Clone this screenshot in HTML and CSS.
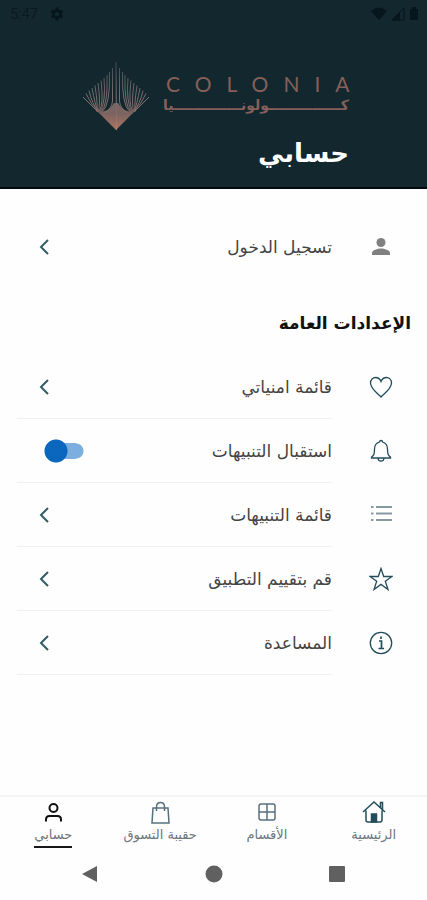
FILE: index.html
```html
<!DOCTYPE html>
<html lang="ar" dir="rtl">
<head>
<meta charset="utf-8">
<meta name="viewport" content="width=device-width, initial-scale=1">
<title>حسابي</title>
<link rel="stylesheet" href="styles.css">
</head>
<body>
<header class="header">
  <div class="status" dir="ltr">
    <span class="clock">5:47</span>
    <svg class="status-gear" viewBox="0 0 24 24" width="14" height="14" aria-hidden="true"><circle cx="12" cy="12" r="6" fill="none" stroke="currentColor" stroke-width="5"/><path d="M12 1v22M2.500 6.500l19 11M2.500 17.500l19-11" stroke="currentColor" stroke-width="5" stroke-dasharray="4 14 4"/></svg>
    <span class="status-icons">
      <svg viewBox="0 0 16 14" width="16" height="14" aria-hidden="true"><path d="M0 4Q8-3 16 4L8 13z" fill="currentColor"/></svg>
      <svg viewBox="0 0 14 14" width="14" height="14" aria-hidden="true"><path d="M1 13L13 1v12z" fill="none" stroke="currentColor"/><path d="M0 13.500L9 5v8.500z" fill="currentColor"/></svg>
      <svg viewBox="0 0 10 14" width="10" height="14" aria-hidden="true"><path d="M1 2h2V0h4v2h2v11H1z" fill="currentColor"/></svg>
    </span>
  </div>
  <div class="brand" dir="ltr">
    <svg class="emblem" viewBox="0 0 68 70" width="68" height="70" aria-hidden="true">
      <defs>
        <linearGradient id="copper" gradientUnits="userSpaceOnUse" x1="0" y1="0" x2="0" y2="70">
          <stop offset="0" stop-color="#3c474b"/><stop offset=".5" stop-color="#7b706f"/><stop offset=".75" stop-color="#876a65"/><stop offset="1" stop-color="#c17f6b"/>
        </linearGradient>
        <g id="rays">
          <path d="M67 36L53 50M64 32.500Q59 44 52 50M61 29.500Q58 43 52 50M58 27Q55 43 52 51M55 24.500Q52 44 53 51M52 22Q49 44 52 51M49 19.500Q46 43 51 51M46 17Q44 42 50 51M43 14Q42 44 49 51M40.500 11Q39.500 44 48 51M37.500 7V40Q38 47 45 52"/>
        </g>
      </defs>
      <g fill="none" stroke="url(#copper)" stroke-width="1">
        <use href="#rays"/>
        <use href="#rays" transform="matrix(-1 0 0 1 68 0)"/>
        <path d="M34.500 69L34 1"/>
      </g>
      <path d="M34 69L16 51Q27 51 32 42h4Q41 51 52 51z" fill="url(#copper)" opacity=".9"/>
    </svg>
    <div class="wordmark">
      <span class="wordmark-latin">COLONIA</span>
      <span class="wordmark-arabic" lang="ar" dir="rtl">كـــــــــــــــولونــــــــــــــيا</span>
    </div>
  </div>
  <h1 class="title">حسابي</h1>
</header>

<main class="content">
  <a class="row row-login" href="#login">
    <svg class="icon icon-muted" viewBox="0 0 24 24" aria-hidden="true"><circle cx="12" cy="7.500" r="4.500" fill="currentColor"/><path d="M3 20v-2c0-3 6-4.500 9-4.500s9 1.500 9 4.500v2z" fill="currentColor"/></svg>
    <span class="row-body"><span>تسجيل الدخول</span>
      <svg class="chevron" viewBox="0 0 14 18" aria-hidden="true"><path d="M11 2L4 9l7 7"/></svg></span>
  </a>

  <h2 class="section-title">الإعدادات العامة</h2>

  <a class="row" href="#wishlist">
    <svg class="icon" viewBox="0 0 24 24" aria-hidden="true"><path d="M12 22C9 18.500 1.500 14 1.500 8 1.500 4.500 4 2.500 6.500 2.500c2.500 0 4.500 1.500 5.500 4 1-2.500 3-4 5.500-4 2.500 0 5 2 5 5.500 0 6-7.500 10.500-10.500 14z"/></svg>
    <span class="row-body"><span>قائمة امنياتي</span>
      <svg class="chevron" viewBox="0 0 14 18" aria-hidden="true"><path d="M11 2L4 9l7 7"/></svg></span>
  </a>
  <div class="row">
    <svg class="icon" viewBox="0 0 24 24" aria-hidden="true"><path d="M10.500 3a1.500 1.500 0 0 1 3 0c3.500 1 5 3.500 5 7 0 5 .5 6.500 3 8v1h-19v-1c2.500-1.500 3-3 3-8 0-3.500 1.500-6 5-7zM9 19.500c.5 3.500 5.500 3.500 6 0"/></svg>
    <span class="row-body"><label for="notify">استقبال التنبيهات</label>
      <input class="switch" id="notify" type="checkbox" role="switch" checked></span>
  </div>
  <a class="row" href="#notifications">
    <svg class="icon icon-list" viewBox="0 0 24 24" aria-hidden="true"><path d="M7 4h16M7 10.500h16M7 17h16M2 4h2.500M2 10.500h2.500M2 17h2.500"/></svg>
    <span class="row-body"><span>قائمة التنبيهات</span>
      <svg class="chevron" viewBox="0 0 14 18" aria-hidden="true"><path d="M11 2L4 9l7 7"/></svg></span>
  </a>
  <a class="row" href="#rate">
    <svg class="icon" viewBox="0 0 24 24" aria-hidden="true"><path d="M12 1.500l2.700 8h8.300l-6.700 4.800 2.700 8.200-7-5.100-7 5.100 2.700-8.200L1 9.500h8.300z"/></svg>
    <span class="row-body"><span>قم بتقييم التطبيق</span>
      <svg class="chevron" viewBox="0 0 14 18" aria-hidden="true"><path d="M11 2L4 9l7 7"/></svg></span>
  </a>
  <a class="row" href="#help">
    <svg class="icon" viewBox="0 0 24 24" aria-hidden="true"><circle cx="12" cy="12" r="10.700"/><path d="M10 10h2.500v7.500M9.500 17.500h5.500M12 5.500v2.500" stroke-width="1.700"/></svg>
    <span class="row-body"><span>المساعدة</span>
      <svg class="chevron" viewBox="0 0 14 18" aria-hidden="true"><path d="M11 2L4 9l7 7"/></svg></span>
  </a>
</main>

<nav class="tabs">
  <a class="tab" href="#home">
    <svg class="tab-icon" viewBox="0 0 24 24" aria-hidden="true"><path d="M1 12L12 2l11 10M4 10.500v9.500q0 2 2 2h12q2 0 2-2v-9.500M18.500 7.500V2.500h2v7"/><path d="M9.500 14h5v8h-5z" fill="currentColor"/></svg>
    <span class="tab-label">الرئيسية</span>
  </a>
  <a class="tab" href="#categories">
    <svg class="tab-icon tab-icon-soft" viewBox="0 0 24 24" aria-hidden="true"><rect x="4" y="4" width="16" height="16" rx="2"/><path d="M12 4v16M4 12h16"/></svg>
    <span class="tab-label">الأقسام</span>
  </a>
  <a class="tab" href="#cart">
    <svg class="tab-icon tab-icon-soft" viewBox="0 0 24 24" aria-hidden="true"><path d="M5 8h15l1 15H4zM8.500 11V7q0-4.500 4-4.500t4 4.500v4"/></svg>
    <span class="tab-label">حقيبة التسوق</span>
  </a>
  <a class="tab tab-active" href="#account" aria-current="page">
    <svg class="tab-icon" viewBox="0 0 24 24" aria-hidden="true"><circle cx="12.500" cy="8" r="4"/><path d="M5 21.500v-2q0-3.500 3.500-3.500h8q3.500 0 3.500 3.500v2"/></svg>
    <span class="tab-label">حسابي</span>
  </a>
</nav>

<div class="system-bar" dir="ltr">
  <button class="system-button" aria-label="رجوع"><svg viewBox="0 0 18 18" width="18" height="18"><path d="M1 9L16 1v16z"/></svg></button>
  <button class="system-button" aria-label="الشاشة الرئيسية"><svg viewBox="0 0 18 18" width="18" height="18"><circle cx="9" cy="9" r="8.500"/></svg></button>
  <button class="system-button" aria-label="التطبيقات"><svg viewBox="0 0 18 18" width="18" height="18"><rect x="1" y="1" width="16" height="16" rx="1"/></svg></button>
</div>
</body>
</html>
```
FILE: styles.css
```css
* {
  box-sizing: border-box;
}

body {
  margin: 0;
  min-height: 100vh;
  display: flex;
  flex-direction: column;
  background: #fefefe;
  color: #444;
  font-family: "DejaVu Sans", sans-serif;
  font-size: 17px;
  line-height: 24px;
}

a {
  color: inherit;
  text-decoration: none;
}

.header {
  background: #12272e;
  border-bottom: 2px solid #02090c;
  padding-bottom: 14px;
}

.status {
  display: flex;
  align-items: center;
  gap: 12px;
  height: 28px;
  padding: 0 8px 0 10px;
  color: #07161c;
}

.clock {
  font-family: Roboto, sans-serif;
  font-size: 15px;
  font-weight: 300;
}

.status-icons {
  display: flex;
  gap: 4px;
  margin-left: auto;
}

.brand {
  display: flex;
  justify-content: center;
  gap: 16px;
  padding: 33px 0 0 4px;
}

.wordmark {
  display: flex;
  flex-direction: column;
  width: 183px;
  padding-top: 12px;
  color: #85605a;
}

.wordmark-latin {
  font-family: Lato, sans-serif;
  font-size: 21px;
  line-height: 22px;
  letter-spacing: 15px;
  white-space: nowrap;
}

.wordmark-arabic {
  font-size: 14px;
  font-weight: bold;
  line-height: 20px;
  white-space: nowrap;
}

.title {
  margin: 0;
  padding: 2px 78px 0 0;
  color: #fff;
  font-size: 26px;
  line-height: 40px;
}

.content {
  flex: 1;
  padding-top: 26px;
}

.row {
  display: flex;
  align-items: center;
  gap: 37px;
  height: 64px;
  padding: 0 34px 0 17px;
}

.row-body {
  flex: 1;
  display: flex;
  align-items: center;
  justify-content: space-between;
  align-self: stretch;
  padding-left: 20px;
  background: linear-gradient(#f1f1f1, #f1f1f1) left bottom / 100% 1px no-repeat;
}

.row-login .row-body {
  background: none;
}

.icon {
  width: 24px;
  height: 24px;
  fill: none;
  stroke: #234d5c;
  stroke-width: 1.3;
}

.icon-muted {
  color: #808080;
  stroke: none;
}

.icon-list {
  stroke: #8799a0;
  stroke-width: 2;
}

.chevron {
  width: 14px;
  height: 18px;
  fill: none;
  stroke: #335c66;
  stroke-width: 2;
}

.switch {
  appearance: none;
  width: 40px;
  height: 24px;
  margin: 0 0 0 7px;
  background:
    radial-gradient(circle at 12px 12px, #0b67bd 11px, transparent 12px),
    linear-gradient(#7caee0, #7caee0) 12px 50% / 20px 16px no-repeat,
    radial-gradient(circle at 32px 12px, #7caee0 7px, transparent 8px);
}

.section-title {
  margin: 30px 0 18px;
  padding-right: 16px;
  color: #111;
  font-size: 17px;
  line-height: 28px;
}

.tabs {
  display: grid;
  grid-template-columns: repeat(4, 1fr);
  border-top: 2px solid #f5f5f5;
  color: #234d5c;
}

.tab {
  display: flex;
  flex-direction: column;
  align-items: center;
  padding-top: 3px;
}

.tab-icon {
  width: 24px;
  height: 24px;
  fill: none;
  stroke: currentColor;
  stroke-width: 1.5;
}

.tab-icon-soft {
  stroke: #55717c;
}

.tab-label {
  color: #6d777b;
  font-size: 13px;
  line-height: 22px;
  border-bottom: 2px solid transparent;
}

.tab-active {
  color: #111;
}

.tab-active .tab-icon {
  stroke-width: 2;
}

.tab-active .tab-label {
  border-bottom-color: #181818;
}

.system-bar {
  display: flex;
  justify-content: space-between;
  align-items: center;
  height: 52px;
  padding: 0 81px;
}

.system-button {
  display: flex;
  padding: 0;
  border: 0;
  background: none;
  fill: #606060;
}
```
